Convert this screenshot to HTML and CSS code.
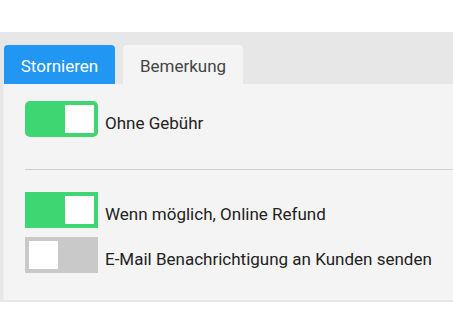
FILE: index.html
```html
<!DOCTYPE html>
<html lang="de">
<head>
<meta charset="utf-8">
<title>Stornieren</title>
<link rel="stylesheet" href="styles.css">
</head>
<body>
<div class="spacer"></div>
<div class="widget">
  <div class="tabs">
    <div class="tab tab-active">Stornieren</div>
    <div class="tab">Bemerkung</div>
  </div>
  <div class="panel">
    <div class="row">
      <span class="toggle toggle-on toggle-round"><span class="knob"></span></span>
      <span class="label">Ohne Gebühr</span>
    </div>
    <div class="divider"></div>
    <div class="group">
      <div class="row">
        <span class="toggle toggle-on"><span class="knob"></span></span>
        <span class="label">Wenn möglich, Online Refund</span>
      </div>
      <div class="row">
        <span class="toggle toggle-off"><span class="knob"></span></span>
        <span class="label">E-Mail Benachrichtigung an Kunden senden</span>
      </div>
    </div>
  </div>
</div>
</body>
</html>
```

FILE: styles.css
```css
* { box-sizing: border-box; }
html, body {
  margin: 0;
  padding: 0;
  background: #ffffff;
  font-family: Roboto, "Liberation Sans", Arial, sans-serif;
  font-size: 17px;
}
.spacer { height: 32px; }
.widget {
  background: #e7e7e7;
}
.tabs {
  display: flex;
  gap: 8px;
  padding: 13px 0 0 4px;
}
.tab {
  height: 39px;
  display: flex;
  align-items: center;
  justify-content: center;
  padding-top: 2px;
  border-radius: 4px 4px 0 0;
  background: #f4f4f4;
  color: #444444;
  width: 120px;
}
.tab-active {
  background: #2196f3;
  color: #ffffff;
  width: 111px;
}
.panel {
  margin-left: 3px;
  background: #f4f4f4;
  border-left: 1px solid #ececec;
  border-bottom: 2px solid #e6e6e6;
  padding: 17px 0 27px 21px;
}
.row {
  display: flex;
  align-items: center;
  gap: 7px;
  color: #222222;
}
.toggle {
  width: 73px;
  height: 36px;
  display: flex;
  align-items: center;
  padding: 0 4px;
}
.toggle-round { border-radius: 5px; }
.toggle-on {
  background: #3dd672;
  justify-content: flex-end;
}
.toggle-off {
  background: #c9c9c9;
  justify-content: flex-start;
}
.knob {
  width: 29px;
  height: 28px;
  background: #ffffff;
}
.divider {
  height: 1px;
  background: #cfcfcf;
  margin: 32px 0 22px 0;
}
.group {
  display: flex;
  flex-direction: column;
  gap: 9px;
}
.label { line-height: 20px; padding-top: 8px; }
```
